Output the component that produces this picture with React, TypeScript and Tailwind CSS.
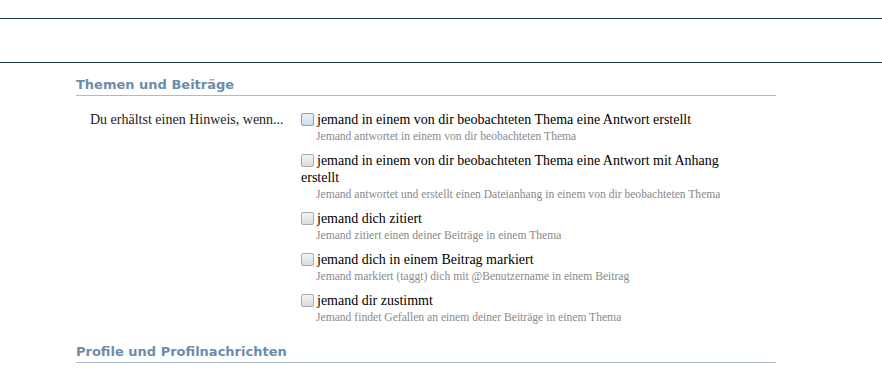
const items = [
  {
    title: "jemand in einem von dir beobachteten Thema eine Antwort erstellt",
    hint: "Jemand antwortet in einem von dir beobachteten Thema",
    active: true,
  },
  {
    title: "jemand in einem von dir beobachteten Thema eine Antwort mit Anhang erstellt",
    hint: "Jemand antwortet und erstellt einen Dateianhang in einem von dir beobachteten Thema",
  },
  {
    title: "jemand dich zitiert",
    hint: "Jemand zitiert einen deiner Beiträge in einem Thema",
  },
  {
    title: "jemand dich in einem Beitrag markiert",
    hint: "Jemand markiert (taggt) dich mit @Benutzername in einem Beitrag",
  },
  {
    title: "jemand dir zustimmt",
    hint: "Jemand findet Gefallen an einem deiner Beiträge in einem Thema",
  },
]

const Box = ({ active }: { active?: boolean }) => (
  <span
    className={
      "mr-[3px] inline-block h-[13px] w-[13px] translate-y-[1px] rounded-[2px] border bg-gradient-to-b align-[-1px] " +
      (active
        ? "border-[#7da2ce] from-[#eef3fa] to-[#cfdcec]"
        : "border-[#a9a9a9] from-[#f4f4f4] to-[#dcdcdc]")
    }
  />
)

const Heading = ({ children }: { children: React.ReactNode }) => (
  <h3 className="border-b border-[#a8bccc] pb-[1px] font-['DejaVu_Sans',sans-serif] text-[13px] font-bold leading-[18px] text-[#6c8cab]">
    {children}
  </h3>
)

export default function App() {
  return (
    <div className="h-[374px] w-[882px] overflow-hidden bg-white font-['Liberation_Serif',serif]">
      <div className="mt-[18px] h-[45px] border-y border-[#1d3441]" />
      <div className="ml-[76px] w-[700px] pt-[13px]">
        <Heading>Themen und Beiträge</Heading>
        <div className="mt-[15px] grid grid-cols-[225px_440px]">
          <div className="pl-[14px] text-[14px] leading-[18px] text-[#222]">
            Du erhältst einen Hinweis, wenn...
          </div>
          <ul className="flex flex-col gap-[7px]">
            {items.map((it) => (
              <li key={it.title}>
                <label className="block text-[14px] leading-[17px] text-black">
                  <Box active={it.active} />
                  {it.title}
                </label>
                <p className="pl-[15px] text-[11.6px] leading-[17px] text-[#8a8a8a]">
                  {it.hint}
                </p>
              </li>
            ))}
          </ul>
        </div>
        <div className="mt-[17px]">
          <Heading>Profile und Profilnachrichten</Heading>
        </div>
      </div>
    </div>
  )
}
